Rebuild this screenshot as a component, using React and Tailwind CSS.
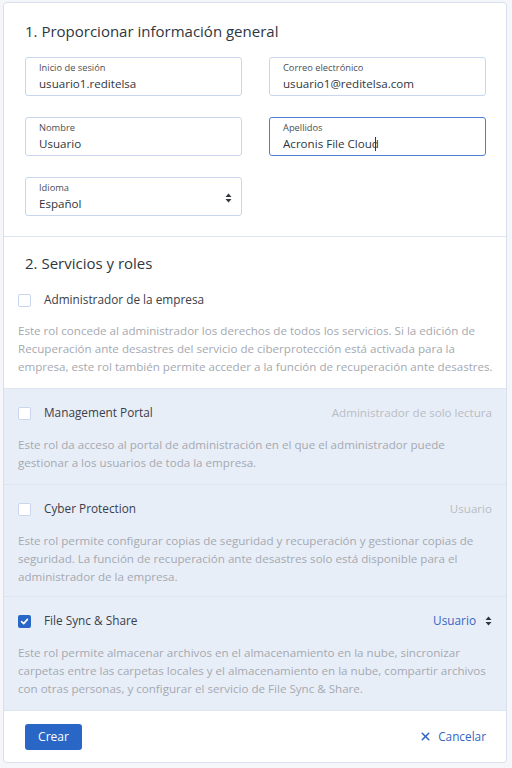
import { X } from 'lucide-react';

const font = { fontFamily: '"Open Sans", "Noto Sans", sans-serif' };

function Field({ label, value, focused, select }) {
  return (
    <div
      className={`relative h-[39px] rounded-[3px] border bg-white pl-[13px] pt-[3px] ${
        focused ? 'border-[#4f80d3]' : 'border-[#c9d6ee]'
      }`}
    >
      <p className="text-[9.3px] leading-[13px] text-[#4a4f57]">{label}</p>
      <p className="text-[11.6px] leading-[19px] text-[#2f3640]">
        {value}
        {focused && <span className="ml-[-4px] inline-block h-[14px] w-px translate-y-[3px] bg-[#2f3640]" />}
      </p>
      {select && <UpDown className="absolute right-[9px] top-[15px]" />}
    </div>
  );
}

function UpDown({ className = '' }) {
  return (
    <svg className={className} width="7" height="10" viewBox="0 0 7 10">
      <path d="M3.5 0.5 L6.5 4 L0.5 4 Z" fill="#2f3640" />
      <path d="M3.5 9.5 L6.5 6 L0.5 6 Z" fill="#2f3640" />
    </svg>
  );
}

function Checkbox({ checked }) {
  return checked ? (
    <span className="grid h-[13px] w-[13px] place-items-center rounded-[2px] bg-[#2966c6]">
      <svg width="9" height="9" viewBox="0 0 9 9">
        <path d="M1.6 4.6 L3.7 6.6 L7.4 2.4" stroke="white" strokeWidth="1.6" fill="none" strokeLinecap="round" strokeLinejoin="round" />
      </svg>
    </span>
  ) : (
    <span className="h-[13px] w-[13px] rounded-[2px] border border-[#c9d6ee] bg-white" />
  );
}

function Role({ title, right, rightSelect, checked, text, blue, pb = 'pb-[12px]' }) {
  return (
    <div className={`border-t border-[#dde5f3] px-[14px] pt-[15px] ${pb} ${blue ? 'bg-[#e8eef8]' : ''}`}>
      <div className="flex h-[18px] items-center">
        <Checkbox checked={checked} />
        <span className="ml-[13px] text-[11.8px] text-[#3a4048]">{title}</span>
        <span className="flex-1" />
        {right && <span className="text-[11.6px] text-[#b8bcc3]">{right}</span>}
        {rightSelect && (
          <span className="flex items-center gap-[9px] text-[11.8px] text-[#3566c2]">
            {rightSelect}
            <UpDown />
          </span>
        )}
      </div>
      <p className="-mr-[6px] mt-[14px] text-[11.6px] leading-[18px] text-[#a5a9b0]">{text}</p>
    </div>
  );
}

export default function App() {
  return (
    <div className="min-h-[768px] bg-[#f4f6fa] pb-[5px] pl-[3px] pr-[5px] pt-[2px]" style={font}>
      <div className="overflow-hidden rounded-[4px] border border-[#d8e0ee] bg-white">
        <div className="pb-5 pl-[21px] pr-[20px] pt-4">
          <h2 className="text-[15px] leading-6 text-[#2f3640]">1. Proporcionar información general</h2>
          <div className="mt-[14px] grid grid-cols-2 gap-x-[27px] gap-y-[21px]">
            <Field label="Inicio de sesión" value="usuario1.reditelsa" />
            <Field label="Correo electrónico" value="usuario1@reditelsa.com" />
            <Field label="Nombre" value="Usuario" />
            <Field label="Apellidos" value="Acronis File Cloud" focused />
            <Field label="Idioma" value="Español" select />
          </div>
        </div>

        <div className="border-t border-[#dde5f3] pl-[21px] pt-[14px]">
          <h2 className="text-[15px] leading-6 text-[#2f3640]">2. Servicios y roles</h2>
        </div>
        <div className="px-[14px] pb-3 pt-[16px]">
          <div className="flex h-[18px] items-center">
            <Checkbox />
            <span className="ml-[13px] text-[11.8px] text-[#3a4048]">Administrador de la empresa</span>
          </div>
          <p className="-mr-[6px] mt-[13px] text-[11.6px] leading-[18px] text-[#a5a9b0]">
            Este rol concede al administrador los derechos de todos los servicios. Si la edición de Recuperación ante desastres del servicio de ciberprotección está activada para la empresa, este rol también permite acceder a la función de recuperación ante desastres.
          </p>
        </div>

        <Role
          blue
          title="Management Portal"
          right="Administrador de solo lectura"
          text="Este rol da acceso al portal de administración en el que el administrador puede gestionar a los usuarios de toda la empresa."
        />
        <Role
          blue
          title="Cyber Protection"
          right="Usuario"
          pb="pb-[10px]"
          text="Este rol permite configurar copias de seguridad y recuperación y gestionar copias de seguridad. La función de recuperación ante desastres solo está disponible para el administrador de la empresa."
        />
        <Role
          blue
          checked
          title="File Sync & Share"
          rightSelect="Usuario"
          text="Este rol permite almacenar archivos en el almacenamiento en la nube, sincronizar carpetas entre las carpetas locales y el almacenamiento en la nube, compartir archivos con otras personas, y configurar el servicio de File Sync & Share."
        />

        <div className="flex h-[52px] items-center justify-between border-t border-[#dde5f3] pl-[21px] pr-[20px]">
          <button className="h-[26px] w-[57px] rounded-[3px] bg-[#2966c6] text-[12px] text-white">Crear</button>
          <button className="flex items-center gap-[6px] text-[11.8px] text-[#3566c2]">
            <X className="h-[13px] w-[13px]" strokeWidth={2.8} />
            Cancelar
          </button>
        </div>
      </div>
    </div>
  );
}
